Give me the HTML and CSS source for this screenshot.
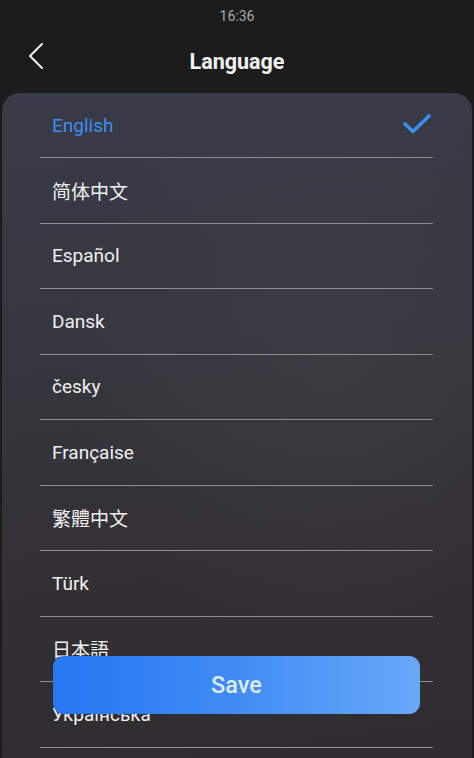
FILE: index.html
```html
<!DOCTYPE html>
<html lang="en">
<head>
<meta charset="utf-8">
<title>Language</title>
<link rel="stylesheet" href="styles.css">
</head>
<body>
<div class="screen">
  <div class="status">16:36</div>
  <header class="header">
    <button class="back" aria-label="Back">
      <svg width="20" height="28" viewBox="0 0 20 28"><path d="M16 2 L4 14 L16 26" fill="none" stroke="#fff" stroke-width="1.8" stroke-linecap="round" stroke-linejoin="round"/></svg>
    </button>
    <h1 class="title">Language</h1>
  </header>
  <main class="panel">
    <ul class="list">
      <li class="item active"><span>English</span>
        <svg class="check" width="30" height="22" viewBox="0 0 30 22"><path d="M3 11 L11 18.5 L27 3" fill="none" stroke="#3a8ff0" stroke-width="3.6" stroke-linecap="round" stroke-linejoin="round"/></svg>
      </li>
      <li class="item"><span class="cjk">简体中文</span></li>
      <li class="item"><span>Español</span></li>
      <li class="item"><span>Dansk</span></li>
      <li class="item"><span>česky</span></li>
      <li class="item"><span>Française</span></li>
      <li class="item"><span class="cjk-tc">繁體中文</span></li>
      <li class="item"><span>Türk</span></li>
      <li class="item"><span class="cjk-jp">日本語</span></li>
      <li class="item"><span>Українська</span></li>
    </ul>
  </main>
  <button class="save">Save</button>
</div>
</body>
</html>
```
FILE: styles.css
```css
* { box-sizing: border-box; }
html, body { margin: 0; padding: 0; }
body {
  background: #1c1c1d;
  font-family: Roboto, "Noto Sans", sans-serif;
  color: #fff;
  width: 474px;
  height: 758px;
  overflow: hidden;
}
.screen {
  position: relative;
  width: 474px;
  height: 758px;
  overflow: hidden;
}
.status {
  height: 32px;
  display: flex;
  align-items: center;
  justify-content: center;
  font-size: 14px;
  color: #a9a9a9;
}
.header {
  position: relative;
  height: 61px;
  display: flex;
  align-items: center;
  justify-content: center;
}
.back {
  position: absolute;
  left: 26px;
  top: 10px;
  background: none;
  border: 0;
  padding: 0;
  display: flex;
}
.title {
  margin: 0;
  font-size: 21.5px;
  font-weight: 700;
  color: #f4f4f4;
  padding-bottom: 2px;
}
.panel {
  margin: 0 2px;
  border-radius: 18px 18px 0 0;
  height: 700px;
  background:
    radial-gradient(ellipse 260px 300px at 330px 260px, rgba(70,70,78,0.35), rgba(70,70,78,0) 100%),
    linear-gradient(172deg, #393b48 0%, #35363e 35%, #333035 65%, #2f2c2f 100%);
  padding: 0 39px 0 38px;
}
.list {
  list-style: none;
  margin: 0;
  padding: 0;
}
.item {
  height: 65.5px;
  border-bottom: 1px solid #8e8d92;
  display: flex;
  align-items: center;
  justify-content: space-between;
  padding: 0 0 0 12px;
  font-size: 19px;
  color: #f0f0f0;
}
.item:first-child { height: 65px; }
.item.active { color: #3a8ff0; }
.check { margin-right: 1px; margin-top: -2px; }
.cjk { font-family: Roboto, "Noto Sans CJK SC", sans-serif; }
.cjk-tc { font-family: Roboto, "Noto Sans CJK TC", sans-serif; }
.cjk-jp { font-family: Roboto, "Noto Sans CJK JP", sans-serif; }
.save {
  position: absolute;
  left: 53px;
  top: 656px;
  width: 367px;
  height: 58px;
  border: 0;
  border-radius: 11px;
  background: linear-gradient(90deg, #2677f2 0%, #3d8af3 45%, #68a8f8 100%);
  color: #dfeaff;
  font-family: Roboto, sans-serif;
  font-size: 23.5px;
  font-weight: 500;
  padding: 0;
}
```
